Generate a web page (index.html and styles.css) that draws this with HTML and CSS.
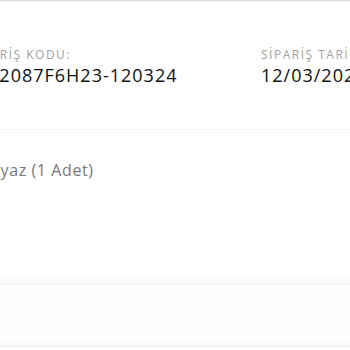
FILE: index.html
```html
<!DOCTYPE html>
<html lang="tr">
<head>
    <meta charset="UTF-8">
    <meta name="viewport" content="width=device-width, initial-scale=1.0">
    <title>Sipariş Detayı</title>
    <link rel="stylesheet" href="styles.css">
</head>
<body>
    <div class="page">
        <div class="order-info">
            <div class="info-item">
                <span class="info-label">Sipariş Kodu:</span>
                <span class="info-value">TB-2087F6H23-120324</span>
            </div>
            <div class="info-item">
                <span class="info-label">Sipariş Tarihi:</span>
                <span class="info-value">12/03/2024</span>
            </div>
        </div>

        <div class="product">
            <p class="product-variant">Beyaz (1 Adet)</p>
        </div>

        <div class="summary"></div>
    </div>
</body>
</html>
```

FILE: styles.css
```css
* {
    margin: 0;
    padding: 0;
    box-sizing: border-box;
}

body {
    font-family: "Open Sans", "Noto Sans", sans-serif;
    background: #fff;
    color: #222;
    overflow: hidden;
}

.page {
    width: 350px;
    border-top: 1px solid #dedede;
    box-shadow: inset 0 1px 0 #f2f2f2;
}

.order-info {
    display: grid;
    grid-template-columns: 292px 292px;
    margin-left: -31px;
    padding: 46px 0 0;
    height: 129px;
    border-bottom: 1px solid #f4f4f4;
}

.info-item {
    display: flex;
    flex-direction: column;
    white-space: nowrap;
}

.info-label {
    font-size: 12px;
    line-height: 16px;
    color: #a0a0a0;
    text-transform: uppercase;
    letter-spacing: 1.5px;
}

.info-value {
    font-size: 18px;
    line-height: 24px;
    color: #111;
    letter-spacing: 1px;
}

.product {
    height: 141px;
    padding-top: 29px;
}

.product-variant {
    margin-left: -20px;
    font-size: 16px;
    line-height: 22px;
    color: #777;
    letter-spacing: 0.6px;
    white-space: nowrap;
}

.summary {
    height: 76px;
    background: linear-gradient(#fff 0, #fafafa 11px, #fafafa 12px, #efefef 12px, #efefef 13px, #fdfdfd 14px, #fdfdfd 66px, #f9f9f9 75px);
    border-bottom: 1px solid #efefef;
}
```
